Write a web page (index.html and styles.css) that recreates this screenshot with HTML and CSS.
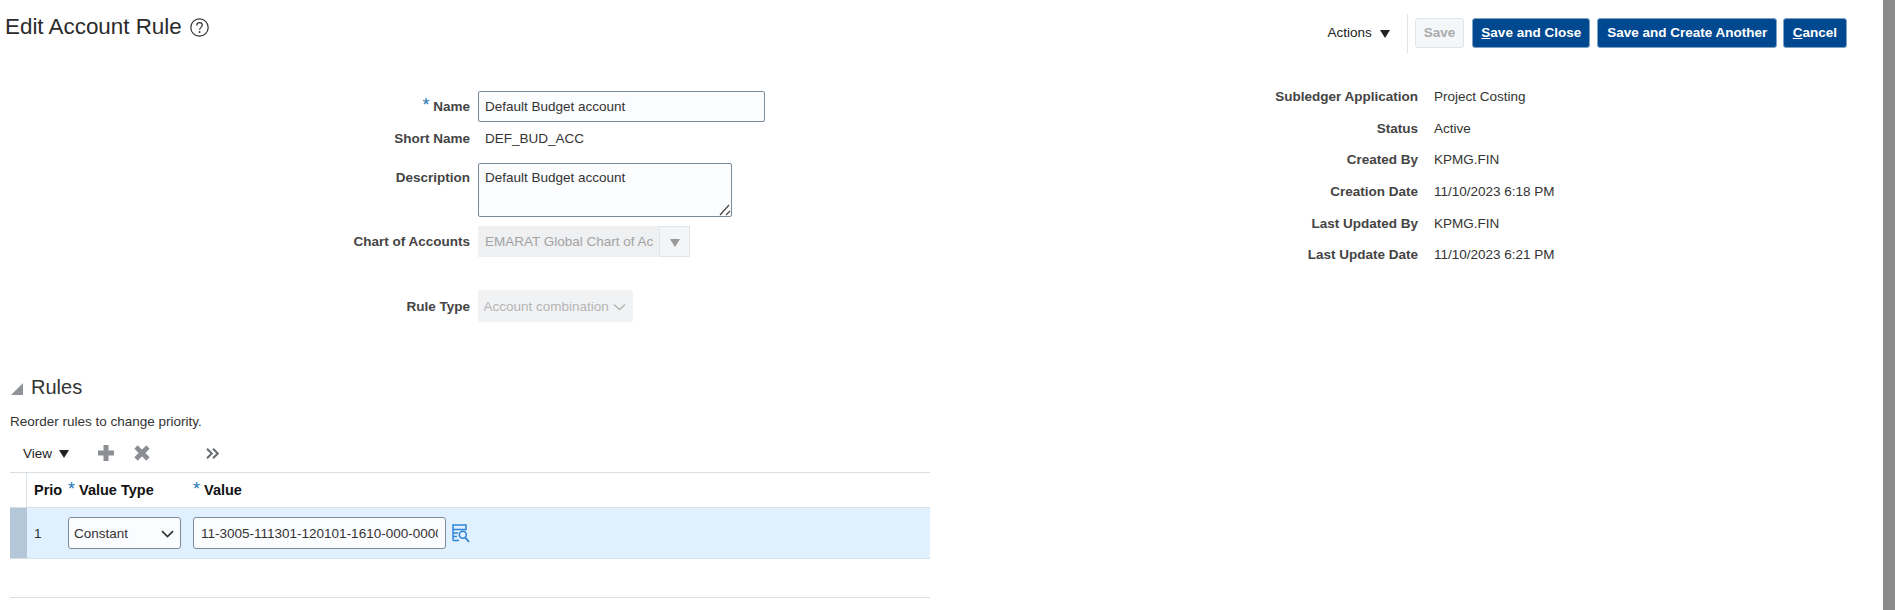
FILE: index.html
```html
<!DOCTYPE html>
<html lang="en">
<head>
  <meta charset="UTF-8">
  <title>Edit Account Rule</title>
  <link rel="stylesheet" href="styles.css">
</head>
<body>

<div class="page">
  <header class="page-header">
    <h1 class="page-title">Edit Account Rule
      <svg class="help-icon" width="19" height="19" viewBox="0 0 19 19" aria-hidden="true">
        <circle cx="9.5" cy="9.5" r="8.7" fill="none" stroke="#333" stroke-width="1.2"/>
        <path d="M6.8 7.4c0-1.7 1.2-2.7 2.8-2.7 1.5 0 2.7 1 2.7 2.4 0 2.2-2.7 2.3-2.7 4.7" fill="none" stroke="#333" stroke-width="1.2"/>
        <circle cx="9.6" cy="14" r=".9" fill="#333"/>
      </svg>
    </h1>
    <div class="page-actions">
      <a class="actions-menu">Actions <span class="caret"></span></a>
      <span class="divider"></span>
      <button class="btn btn-disabled">Save</button>
      <button class="btn btn-close"><u>S</u>ave and Close</button>
      <button class="btn">Save and Create Another</button>
      <button class="btn btn-cancel"><u>C</u>ancel</button>
    </div>
  </header>

  <div class="form-area">
    <div class="form-left">
      <div class="form-row row-name">
        <label class="form-label" for="rule-name"><span class="req">*</span> Name</label>
        <input class="input input-name" id="rule-name" type="text" value="Default Budget account">
      </div>
      <div class="form-row row-short">
        <label class="form-label">Short Name</label>
        <div class="read-value">DEF_BUD_ACC</div>
      </div>
      <div class="form-row row-desc">
        <label class="form-label" for="rule-desc">Description</label>
        <div class="desc-wrap">
          <textarea class="input input-desc" id="rule-desc">Default Budget account</textarea>
          <svg class="resize-grip" width="12" height="12" viewBox="0 0 12 12" aria-hidden="true">
            <path d="M1 11 10 1M7 11l4-4" stroke="#444" stroke-width="1.2" fill="none"/>
          </svg>
        </div>
      </div>
      <div class="form-row row-chart">
        <label class="form-label" for="rule-chart">Chart of Accounts</label>
        <div class="combo">
          <input class="combo-text" id="rule-chart" type="text" value="EMARAT Global Chart of Accounts" disabled>
          <span class="combo-btn"><span class="caret caret-gray"></span></span>
        </div>
      </div>
      <div class="form-row row-type">
        <label class="form-label" for="rule-type">Rule Type</label>
        <div class="select-wrap">
          <select class="select-disabled" id="rule-type" disabled>
            <option>Account combination</option>
          </select>
          <svg class="select-arrow" width="13" height="8" viewBox="0 0 13 8" aria-hidden="true">
            <path d="M1 1.5 6.5 6.5 12 1.5" fill="none" stroke="#b5b5b5" stroke-width="1.4"/>
          </svg>
        </div>
      </div>
    </div>

    <div class="form-right">
      <div class="info-row"><span class="info-label">Subledger Application</span><span>Project Costing</span></div>
      <div class="info-row"><span class="info-label">Status</span><span>Active</span></div>
      <div class="info-row"><span class="info-label">Created By</span><span>KPMG.FIN</span></div>
      <div class="info-row"><span class="info-label">Creation Date</span><span>11/10/2023 6:18 PM</span></div>
      <div class="info-row"><span class="info-label">Last Updated By</span><span>KPMG.FIN</span></div>
      <div class="info-row"><span class="info-label">Last Update Date</span><span>11/10/2023 6:21 PM</span></div>
    </div>
  </div>

  <section class="rules">
    <div class="rules-head">
      <span class="disclose"></span>
      <h2>Rules</h2>
    </div>
    <p class="rules-note">Reorder rules to change priority.</p>
    <div class="toolbar">
      <a class="view-menu">View <span class="caret"></span></a>
      <svg class="tool-add" width="16" height="16" viewBox="0 0 16 16" aria-hidden="true">
        <path d="M8 0v16M0 8h16" stroke="#8b8f94" stroke-width="5"/>
      </svg>
      <svg class="tool-del" width="16" height="16" viewBox="0 0 16 16" aria-hidden="true">
        <path d="M2 2l12 12M14 2 2 14" stroke="#8b8f94" stroke-width="4.6"/>
      </svg>
      <svg class="tool-more" width="13" height="11" viewBox="0 0 13 11" aria-hidden="true">
        <path d="M1 .7 5.8 5.5 1 10.3M7 .7l4.8 4.8L7 10.3" fill="none" stroke="#666b70" stroke-width="2"/>
      </svg>
    </div>

    <div class="grid">
      <div class="grid-head">
        <div class="cell-gutter"></div>
        <div class="col-prio">Prio</div>
        <div class="col-type"><span class="req">*</span> Value Type</div>
        <div class="col-value"><span><span class="req">*</span> Value</span></div>
      </div>
      <div class="grid-row">
        <div class="cell-gutter"></div>
        <div class="col-prio">1</div>
        <div class="col-type">
          <div class="select-wrap">
            <select class="select-box">
              <option>Constant</option>
            </select>
            <svg class="select-arrow" width="13" height="8" viewBox="0 0 13 8" aria-hidden="true">
              <path d="M1 1.2 6.5 6.5 12 1.2" fill="none" stroke="#333" stroke-width="1.7"/>
            </svg>
          </div>
        </div>
        <div class="col-value">
          <input class="value-input" type="text" value="11-3005-111301-120101-1610-000-0000-000">
          <svg class="lookup" width="18" height="19" viewBox="0 0 18 19" aria-hidden="true">
            <path d="M1 1h13v4.5H1zM1 9h5M1 12.5h4M1 16.5h6M1 5.5v11" fill="none" stroke="#2f85d8" stroke-width="1.5"/>
            <circle cx="10.8" cy="10.8" r="3.5" fill="none" stroke="#2f85d8" stroke-width="1.6"/>
            <path d="M13.5 13.8 17 18" stroke="#2f85d8" stroke-width="1.8"/>
          </svg>
        </div>
      </div>
      <div class="grid-empty"></div>
    </div>
  </section>
</div>

<div class="side-strip"></div>

</body>
</html>
```

FILE: styles.css
```css
/* Page shell */
body {
  font-family: "Liberation Sans", Arial, sans-serif;
  font-size: 13.5px;
  color: #333;
  margin: 0;
  height: 610px;
  overflow: hidden;
  display: flex;
  background-color: #fff;
}
.page {
  flex: 1;
  min-width: 0;
}
.side-strip {
  width: 12px;
  background-color: #8a8a8a;
}
input, select, textarea {
  font-family: inherit;
  font-size: 13.5px;
}

/* Header */
.page-header {
  display: flex;
  justify-content: space-between;
  height: 81px;
  padding: 0 36px 0 5px;
}
.page-title {
  margin: 13px 0 0;
  font-size: 22.4px;
  font-weight: normal;
  line-height: 28px;
  color: #2b2b2b;
  display: flex;
  align-items: center;
  gap: 8px;
  height: 28px;
}
.page-actions {
  display: flex;
  align-items: flex-start;
  margin-top: 14px;
}
.actions-menu {
  color: #222;
  margin-top: 11px;
  display: flex;
  align-items: center;
  gap: 8px;
}
.caret {
  display: inline-block;
  border-left: 5px solid transparent;
  border-right: 5px solid transparent;
  border-top: 8px solid #222;
  margin-top: 2px;
}
.caret-gray {
  border-top-color: #999;
}
.divider {
  width: 1px;
  height: 39px;
  background-color: #dfe4e8;
  margin: 0 7px 0 17px;
}
.btn {
  font-family: inherit;
  font-size: 13.5px;
  font-weight: bold;
  color: #fff;
  background-color: #00488f;
  border: 1px solid #7fa3c7;
  border-radius: 3px;
  height: 30px;
  padding: 0 9px 2px;
  margin: 4px 0 0 7px;
}
.btn-close {
  padding: 0 8px 2px;
  margin-left: 8px;
}
.btn-cancel {
  margin-left: 5.5px;
}
.btn-disabled {
  color: #a9abad;
  background-color: #f5f6f7;
  border-color: #e2e5e8;
  padding: 0 8px 2px;
  margin-left: 0;
}

/* Form */
.form-area {
  display: flex;
}
.form-left {
  width: 1250px;
  padding-top: 10px;
}
.form-row {
  display: flex;
  align-items: center;
}
.form-label {
  width: 470px;
  margin-right: 8px;
  text-align: right;
  font-weight: bold;
  color: #444;
  flex-shrink: 0;
}
.req {
  color: #2474b5;
  font-weight: normal;
  font-size: 18px;
  line-height: 10px;
}
.row-name {
  height: 31px;
}
.row-short {
  height: 32px;
}
.row-desc {
  height: 54px;
  margin-top: 9px;
  align-items: flex-start;
}
.row-desc .form-label {
  padding-top: 7px;
}
.row-chart {
  height: 31px;
  margin-top: 9px;
}
.row-type {
  height: 32px;
  margin-top: 33px;
}
.input {
  box-sizing: border-box;
  background-color: #fbfcfe;
  border: 1px solid #7c8b99;
  border-radius: 2px;
  padding: 0 6px;
  margin: 0;
  color: #333;
  outline: none;
}
.input-name {
  width: 287px;
  height: 31px;
}
.desc-wrap {
  position: relative;
  width: 254px;
  height: 54px;
}
.input-desc {
  width: 100%;
  height: 100%;
  padding-top: 6px;
  display: block;
  resize: none;
}
.resize-grip {
  position: absolute;
  right: 1px;
  bottom: 1px;
}
.read-value {
  padding-left: 7px;
  color: #333;
}
.combo {
  display: flex;
  width: 212px;
  height: 31px;
  background-color: #eff0f2;
}
.combo-text {
  flex: 1;
  min-width: 0;
  padding: 0 6px 0 7px;
  border: none;
  background: transparent;
  color: #a3a3a3;
}
.combo-btn {
  box-sizing: border-box;
  width: 31px;
  flex-shrink: 0;
  display: flex;
  align-items: center;
  justify-content: center;
  background-color: #f4f5f6;
  border: 1px solid #e3e6e9;
}
.select-wrap {
  position: relative;
  display: inline-block;
}
.select-arrow {
  position: absolute;
  right: 7px;
  top: 13px;
  pointer-events: none;
}
.select-disabled {
  appearance: none;
  display: block;
  box-sizing: border-box;
  width: 155px;
  height: 32px;
  padding: 0 0 0 5.5px;
  margin: 0;
  background-color: #f1f2f3;
  border: none;
  border-radius: 2px;
  color: #b5b5b5;
  opacity: 1;
}

/* Read only details on the right */
.form-right {
  flex: 1;
}
.info-row {
  display: flex;
  align-items: center;
  height: 31.6px;
}
.info-label {
  width: 168px;
  margin-right: 16px;
  text-align: right;
  font-weight: bold;
  color: #444;
}

/* Rules section */
.rules {
  width: 920px;
  margin-left: 10px;
  margin-top: 51px;
}
.rules-head {
  display: flex;
  align-items: center;
  height: 28px;
}
.rules-head h2 {
  margin: 0 0 0 8px;
  font-size: 20px;
  font-weight: normal;
  color: #333;
}
.disclose {
  margin: 4px 0 0 1px;
  border-left: 12px solid transparent;
  border-bottom: 12px solid #8f9397;
}
.rules-note {
  margin: 12px 0 0;
  line-height: 18px;
}
.toolbar {
  display: flex;
  align-items: center;
  height: 32px;
  padding-left: 13px;
  margin: 6px 0 3px;
}
.view-menu {
  display: flex;
  align-items: center;
  gap: 7px;
  color: #222;
}
.tool-add {
  margin-left: 29px;
}
.tool-del {
  margin-left: 20px;
}
.tool-more {
  margin-left: 56px;
}

/* Rules table */
.grid {
  border-top: 1px solid #d6dfe6;
}
.grid-head,
.grid-row {
  display: flex;
}
.grid-head {
  height: 34px;
  align-items: center;
  font-size: 14.5px;
  font-weight: bold;
  color: #111;
}
.grid-head .cell-gutter {
  height: 100%;
  border-right: 1px solid #dde3e8;
  box-sizing: border-box;
}
.cell-gutter {
  width: 17px;
  flex-shrink: 0;
}
.col-prio {
  width: 35px;
  padding-left: 7px;
  box-sizing: border-box;
  flex-shrink: 0;
}
.col-type {
  width: 125px;
  padding-left: 6px;
  box-sizing: border-box;
  flex-shrink: 0;
}
.col-value {
  flex: 1;
  padding-left: 6px;
  display: flex;
  align-items: center;
}
.grid-row {
  height: 52px;
  box-sizing: border-box;
  align-items: center;
  background-color: #e1f0fe;
  border-top: 1px solid #d6dfe6;
  border-bottom: 1px solid #d6dfe6;
}
.grid-row .cell-gutter {
  height: 100%;
  background-color: #b3c7d8;
}
.select-box {
  appearance: none;
  box-sizing: border-box;
  display: block;
  width: 113px;
  height: 32px;
  padding: 0 5px;
  margin: 0;
  color: #333;
  background-color: #fbfcfe;
  border: 1px solid #7c8b99;
  border-radius: 3px;
}
.value-input {
  box-sizing: border-box;
  width: 253px;
  height: 32px;
  padding: 0 7px;
  margin: 0;
  color: #333;
  background-color: #fbfcfe;
  border: 1px solid #7c8b99;
  border-radius: 3px;
}
.lookup {
  margin-left: 6px;
}
.grid-empty {
  height: 39px;
  box-sizing: border-box;
  border-bottom: 1px solid #d6dfe6;
}
```
